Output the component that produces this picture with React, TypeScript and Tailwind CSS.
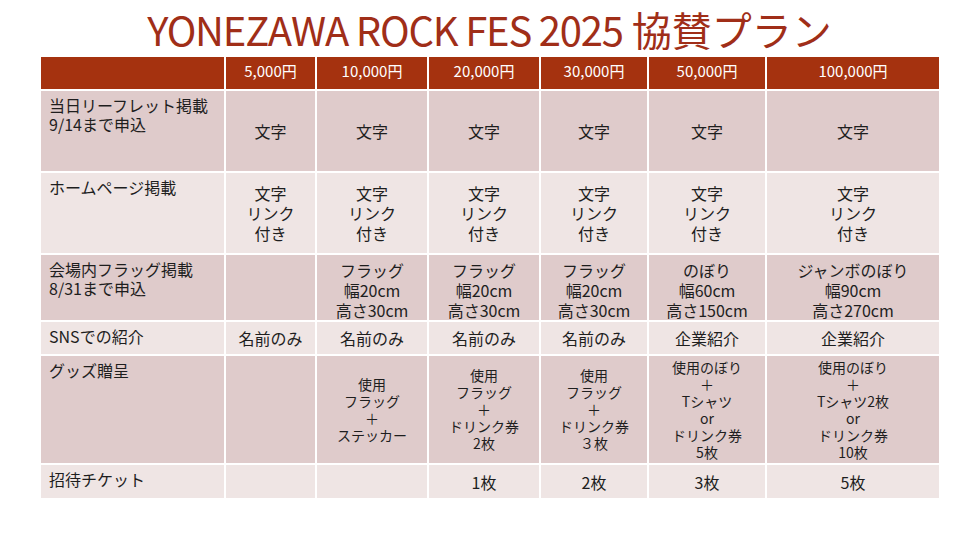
import React from "react";

const DARK = "bg-[#dfcbcb]";
const LIGHT = "bg-[#efe5e4]";

type Row = {
  label: string[];
  values: string[][];
  bg: string;
  size: string;
};

const rows: Row[] = [
  {
    label: ["当日リーフレット掲載", "9/14まで申込"],
    values: [["文字"], ["文字"], ["文字"], ["文字"], ["文字"], ["文字"]],
    bg: DARK,
    size: "text-[16px] leading-[20px]",
  },
  {
    label: ["ホームページ掲載"],
    values: Array.from({ length: 6 }, () => ["文字", "リンク", "付き"]),
    bg: LIGHT,
    size: "text-[16px] leading-[20px]",
  },
  {
    label: ["会場内フラッグ掲載", "8/31まで申込"],
    values: [
      [],
      ["フラッグ", "幅20cm", "高さ30cm"],
      ["フラッグ", "幅20cm", "高さ30cm"],
      ["フラッグ", "幅20cm", "高さ30cm"],
      ["のぼり", "幅60cm", "高さ150cm"],
      ["ジャンボのぼり", "幅90cm", "高さ270cm"],
    ],
    bg: DARK,
    size: "text-[16px] leading-[20px] pt-[4px]",
  },
  {
    label: ["SNSでの紹介"],
    values: [["名前のみ"], ["名前のみ"], ["名前のみ"], ["名前のみ"], ["企業紹介"], ["企業紹介"]],
    bg: LIGHT,
    size: "text-[16px] leading-[20px]",
  },
  {
    label: ["グッズ贈呈"],
    values: [
      [],
      ["使用", "フラッグ", "＋", "ステッカー"],
      ["使用", "フラッグ", "＋", "ドリンク券", "2枚"],
      ["使用", "フラッグ", "＋", "ドリンク券", "３枚"],
      ["使用のぼり", "＋", "Tシャツ", "or", "ドリンク券", "5枚"],
      ["使用のぼり", "＋", "Tシャツ2枚", "or", "ドリンク券", "10枚"],
    ],
    bg: DARK,
    size: "text-[14px] leading-[17px]",
  },
  {
    label: ["招待チケット"],
    values: [[], [], ["1枚"], ["2枚"], ["3枚"], ["5枚"]],
    bg: LIGHT,
    size: "text-[16px] leading-[20px]",
  },
];

const headers = ["5,000円", "10,000円", "20,000円", "30,000円", "50,000円", "100,000円"];

export default function App() {
  return (
    <div
      className="w-[979px] h-[551px] bg-white text-[#1e1e1e]"
      style={{ fontFamily: '"Noto Sans CJK JP", "Noto Sans", sans-serif' }}
    >
      <div className="h-[57px] pt-[6px] text-center text-[40px] leading-[46px] text-[#a02e18]">
        <span className="tracking-[-1.2px]">YONEZAWA ROCK FES 2025</span>
        <span> 協賛プラン</span>
      </div>
      <div className="ml-[41px] grid grid-cols-[183px_89px_110px_110px_106px_116px_172px] grid-rows-[32px_80px_80px_65px_32px_107px_33px] gap-[2px]">
        <div className="bg-[#a5320f]" />
        {headers.map((h) => (
          <div
            key={h}
            className="bg-[#a5320f] text-white text-[15px] leading-[20px] pt-[4px] text-center"
          >
            {h}
          </div>
        ))}
        {rows.map((r, i) => (
          <React.Fragment key={i}>
            <div className={`${r.bg} pl-[8px] pt-[5px] text-[16px] leading-[19px]`}>
              {r.label.map((l) => (
                <div key={l}>{l}</div>
              ))}
            </div>
            {r.values.map((v, j) => (
              <div
                key={j}
                className={`${r.bg} ${r.size} flex flex-col items-center justify-center text-center`}
              >
                {v.map((t, k) => (
                  <div key={k}>{t}</div>
                ))}
              </div>
            ))}
          </React.Fragment>
        ))}
      </div>
    </div>
  );
}
